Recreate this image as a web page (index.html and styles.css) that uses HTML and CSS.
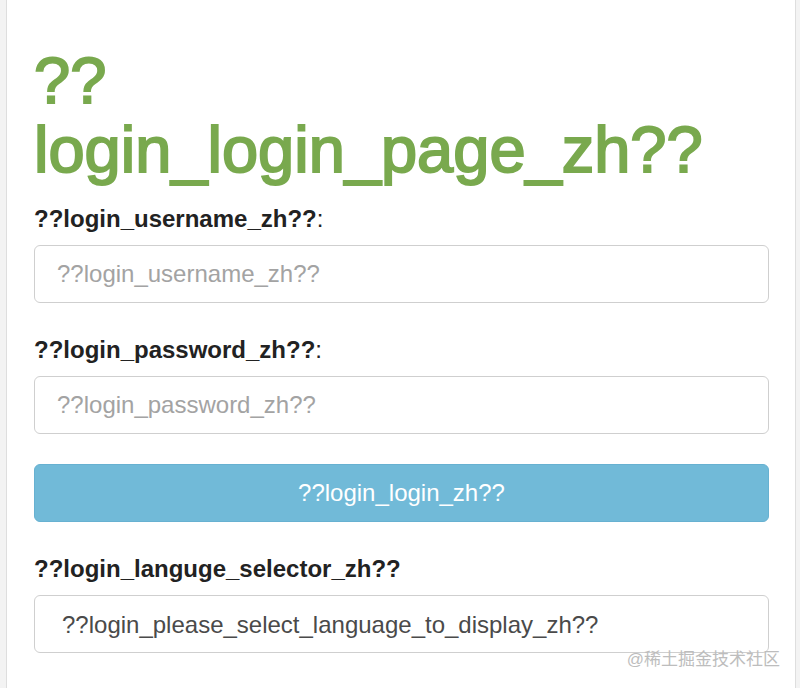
FILE: index.html
```html
<!DOCTYPE html>
<html lang="zh">
<head>
<meta charset="utf-8">
<title>login</title>
<link rel="stylesheet" href="styles.css">
</head>
<body>
<div class="frame">
  <div class="panel">
    <h1 class="title">??<br>login_login_page_zh??</h1>
    <form class="form">
      <div class="group">
        <label class="label" for="u">??login_username_zh??<span class="colon">:</span></label>
        <input class="control" id="u" type="text" placeholder="??login_username_zh??">
      </div>
      <div class="group">
        <label class="label" for="p">??login_password_zh??<span class="colon">:</span></label>
        <input class="control" id="p" type="password" placeholder="??login_password_zh??">
      </div>
      <div class="group">
        <button class="btn" type="button">??login_login_zh??</button>
      </div>
      <div class="group">
        <label class="label" for="l">??login_languge_selector_zh??</label>
        <select class="control select" id="l">
          <option>??login_please_select_language_to_display_zh??</option>
        </select>
      </div>
    </form>
  </div>
  <div class="watermark">@稀土掘金技术社区</div>
</div>
</body>
</html>
```
FILE: styles.css
```css
html, body {
  margin: 0;
  padding: 0;
  height: 100%;
}
body {
  background: #f3f3f3;
  font-family: "Liberation Sans", Arial, "Noto Sans CJK SC", sans-serif;
  color: #333;
}
.frame {
  position: relative;
  height: 688px;
  padding: 0 4px 0 6px;
  box-sizing: border-box;
  overflow: hidden;
}
.panel {
  background: #fff;
  height: 100%;
  border-left: 1px solid #dedede;
  border-right: 1px solid #dedede;
  padding: 46px 26px 0 27px;
  box-sizing: border-box;
}
.title {
  margin: 0 0 18px;
  font-size: 65px;
  line-height: 69px;
  font-weight: normal;
  color: #79a94e;
  -webkit-text-stroke: 2px #79a94e;
}
.form {
  margin: 0;
}
.group {
  margin-bottom: 30px;
}
.label {
  display: block;
  font-size: 24px;
  line-height: 34px;
  font-weight: bold;
  color: #222;
  margin-bottom: 9px;
}
.colon {
  font-weight: normal;
}
.control {
  display: block;
  width: 100%;
  height: 58px;
  box-sizing: border-box;
  border: 1.5px solid #cfcfcf;
  border-radius: 6px;
  background: #fff;
  padding: 0 22px;
  font-family: "Liberation Sans", Arial, sans-serif;
  font-size: 24px;
  color: #555;
  outline: none;
}
.control::placeholder {
  color: #a3a3a3;
}
.select {
  -webkit-appearance: none;
  appearance: none;
  padding-left: 27px;
  color: #4a4a4a;
}
.btn {
  display: block;
  width: 100%;
  height: 58px;
  box-sizing: border-box;
  border: 1px solid #67b1d1;
  border-radius: 6px;
  background: #71bad8;
  color: #fff;
  font-family: "Liberation Sans", Arial, sans-serif;
  font-size: 24px;
  cursor: pointer;
}
.watermark {
  position: absolute;
  right: 20px;
  bottom: 16px;
  font-size: 17px;
  line-height: 24px;
  color: #bdbdbd;
  font-family: "Liberation Sans", "Noto Sans CJK SC", sans-serif;
}
```
